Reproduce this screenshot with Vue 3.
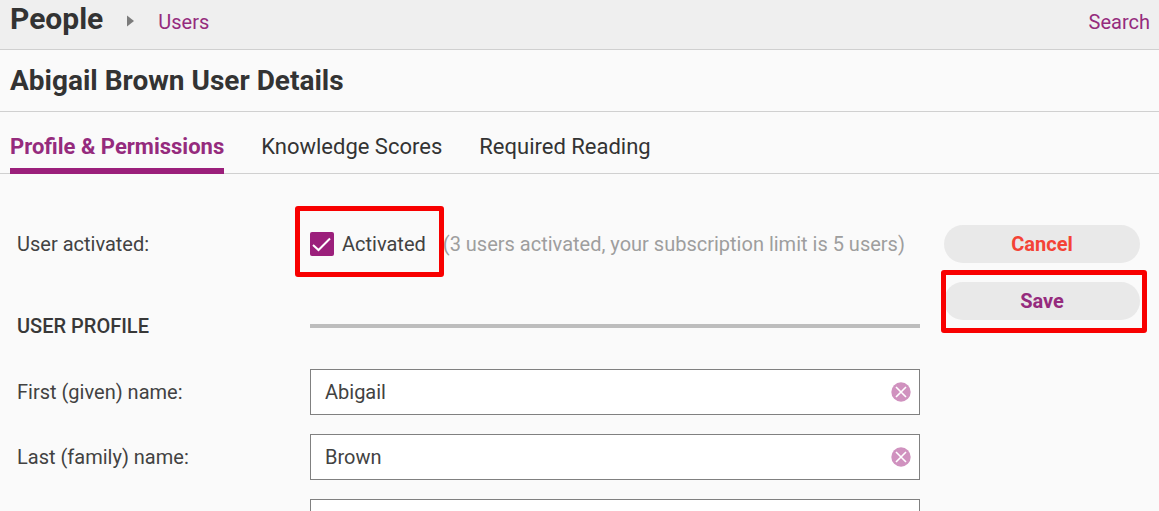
<template>
  <div class="page">
    <header class="topbar">
      <nav class="breadcrumb">
        <span class="section">People</span>
        <svg class="arrow" width="7" height="12" viewBox="0 0 7 12" aria-hidden="true">
          <path d="M0 0.5 L7 6 L0 11.5 Z" fill="#7b7b7b" />
        </svg>
        <a href="#users" class="link">Users</a>
      </nav>
      <a href="#search" class="link">Search</a>
    </header>

    <div class="title-bar">
      <h1>{{ firstName }} {{ lastName }} User Details</h1>
    </div>

    <nav class="tabs">
      <a
        v-for="tab in tabs"
        :key="tab.id"
        :href="'#' + tab.id"
        class="tab"
        :class="{ active: tab.id === activeTab }"
        @click.prevent="activeTab = tab.id"
      >{{ tab.label }}</a>
    </nav>

    <form class="content" @submit.prevent>
      <div class="fields">
        <div class="row status-row">
          <span class="label">User activated:</span>
          <div class="status">
            <label class="check highlight">
              <input v-model="activated" type="checkbox" class="check-input">
              <span class="check-box">
                <svg v-if="activated" width="24" height="24" viewBox="0 0 24 24" aria-hidden="true">
                  <path d="M3 13 L8.5 18 L20 6.5" fill="none" stroke="#fff" stroke-width="2" />
                </svg>
              </span>
              <span>Activated</span>
            </label>
            <span class="note">(3 users activated, your subscription limit is 5 users)</span>
          </div>
        </div>

        <div class="row heading-row">
          <h2>USER PROFILE</h2>
          <hr>
        </div>

        <div class="row">
          <label class="label" for="first-name">First (given) name:</label>
          <div class="field">
            <input id="first-name" v-model="firstName" type="text">
            <button type="button" class="clear" aria-label="Clear first name" @click="firstName = ''">
              <svg width="20" height="20" viewBox="0 0 20 20" aria-hidden="true">
                <circle cx="10" cy="10" r="9.7" fill="#d092bf" />
                <path d="M5 5 L15 15 M15 5 L5 15" stroke="#fff" stroke-width="1.6" />
              </svg>
            </button>
          </div>
        </div>

        <div class="row">
          <label class="label" for="last-name">Last (family) name:</label>
          <div class="field">
            <input id="last-name" v-model="lastName" type="text">
            <button type="button" class="clear" aria-label="Clear last name" @click="lastName = ''">
              <svg width="20" height="20" viewBox="0 0 20 20" aria-hidden="true">
                <circle cx="10" cy="10" r="9.7" fill="#d092bf" />
                <path d="M5 5 L15 15 M15 5 L5 15" stroke="#fff" stroke-width="1.6" />
              </svg>
            </button>
          </div>
        </div>

        <div class="row">
          <span class="label"></span>
          <div class="field">
            <input v-model="email" type="text" aria-label="Email">
          </div>
        </div>
      </div>

      <div class="actions">
        <button type="button" class="btn cancel">Cancel</button>
        <div class="highlight save-wrap">
          <button type="submit" class="btn save">Save</button>
        </div>
      </div>
    </form>
  </div>
</template>

<script setup>
import { ref } from 'vue';

const tabs = [
  { id: 'profile', label: 'Profile & Permissions' },
  { id: 'scores', label: 'Knowledge Scores' },
  { id: 'reading', label: 'Required Reading' }
];

const activeTab = ref('profile');
const activated = ref(true);
const firstName = ref('Abigail');
const lastName = ref('Brown');
const email = ref('');
</script>

<style>
body {
  margin: 0;
  background: #fafafa;
}
</style>

<style scoped>
.page {
  font-family: Roboto, "Liberation Sans", sans-serif;
  font-size: 20px;
  line-height: 24px;
  color: #424242;
}

/* top bar */
.topbar {
  display: flex;
  justify-content: space-between;
  align-items: baseline;
  height: 49px;
  padding: 0 9px 0 10px;
  background: #efefef;
  border-bottom: 1px solid #d0d0d0;
}

.breadcrumb {
  display: flex;
  align-items: baseline;
  gap: 24px;
}

.section {
  font-size: 30px;
  line-height: 38px;
  font-weight: 700;
  color: #333;
}

.arrow {
  align-self: center;
  margin-top: 4px;
}

.link {
  color: #952b7d;
  text-decoration: none;
}

.title-bar {
  padding: 12px 10px;
  border-bottom: 1px solid #d0d0d0;
}

h1 {
  margin: 0;
  font-size: 28px;
  line-height: 37px;
  font-weight: 700;
  color: #333;
}

/* tabs */
.tabs {
  display: flex;
  gap: 37px;
  height: 61px;
  padding: 0 10px;
  border-bottom: 1px solid #d0d0d0;
}

.tab {
  padding-top: 23px;
  font-size: 22px;
  color: #333;
  text-decoration: none;
}

.tab.active {
  font-weight: 700;
  color: #952b7d;
  margin-bottom: -1px;
  border-bottom: 6px solid #9b1f7b;
}

/* form */
.content {
  display: flex;
  gap: 24px;
  padding: 51px 19px 20px 17px;
}

.fields {
  flex: 1;
  min-width: 0;
}

.row {
  display: grid;
  grid-template-columns: 293px minmax(0, 1fr);
  align-items: center;
  margin-bottom: 19px;
}

.status-row {
  min-height: 38px;
  margin-bottom: 51px;
}

.heading-row {
  margin-bottom: 31px;
}

.status {
  display: flex;
  align-items: center;
  gap: 17px;
  white-space: nowrap;
}

.check {
  display: flex;
  align-items: center;
  gap: 8px;
}

.check-input {
  position: absolute;
  width: 24px;
  height: 24px;
  margin: 0;
  opacity: 0;
}

.check-box {
  width: 24px;
  height: 24px;
  border-radius: 2px;
  background: #9b1f7b;
}

.check-box svg {
  display: block;
}

.note {
  color: #9e9e9e;
}

h2 {
  margin: 0;
  font-size: 20px;
  line-height: 24px;
  font-weight: 500;
  color: #383838;
}

hr {
  width: 100%;
  height: 4px;
  margin: 0;
  border: none;
  background: #bdbdbd;
}

.field {
  position: relative;
}

.field input {
  display: block;
  width: 100%;
  height: 46px;
  box-sizing: border-box;
  padding: 0 40px 0 14px;
  border: 1px solid #808080;
  background: #fff;
  font: inherit;
  color: inherit;
}

.clear {
  position: absolute;
  top: 13px;
  right: 9px;
  padding: 0;
  border: none;
  background: none;
  cursor: pointer;
}

.clear svg {
  display: block;
}

.actions {
  display: flex;
  flex-direction: column;
  gap: 19px;
  width: 196px;
}

.btn {
  display: block;
  width: 100%;
  height: 38px;
  padding: 0;
  border: none;
  border-radius: 19px;
  background: #e9e9e9;
  font: inherit;
  font-weight: 700;
  cursor: pointer;
}

.cancel {
  color: #f44336;
}

.save {
  color: #952b7d;
}

/* red frame around the controls to notice */
.highlight {
  position: relative;
}

.highlight::after {
  content: '';
  position: absolute;
  inset: -26px -18px -21px -15px;
  border: 5px solid #f80000;
  border-radius: 3px;
  pointer-events: none;
}

.save-wrap::after {
  inset: -12px -7px -13px -3px;
}
</style>
